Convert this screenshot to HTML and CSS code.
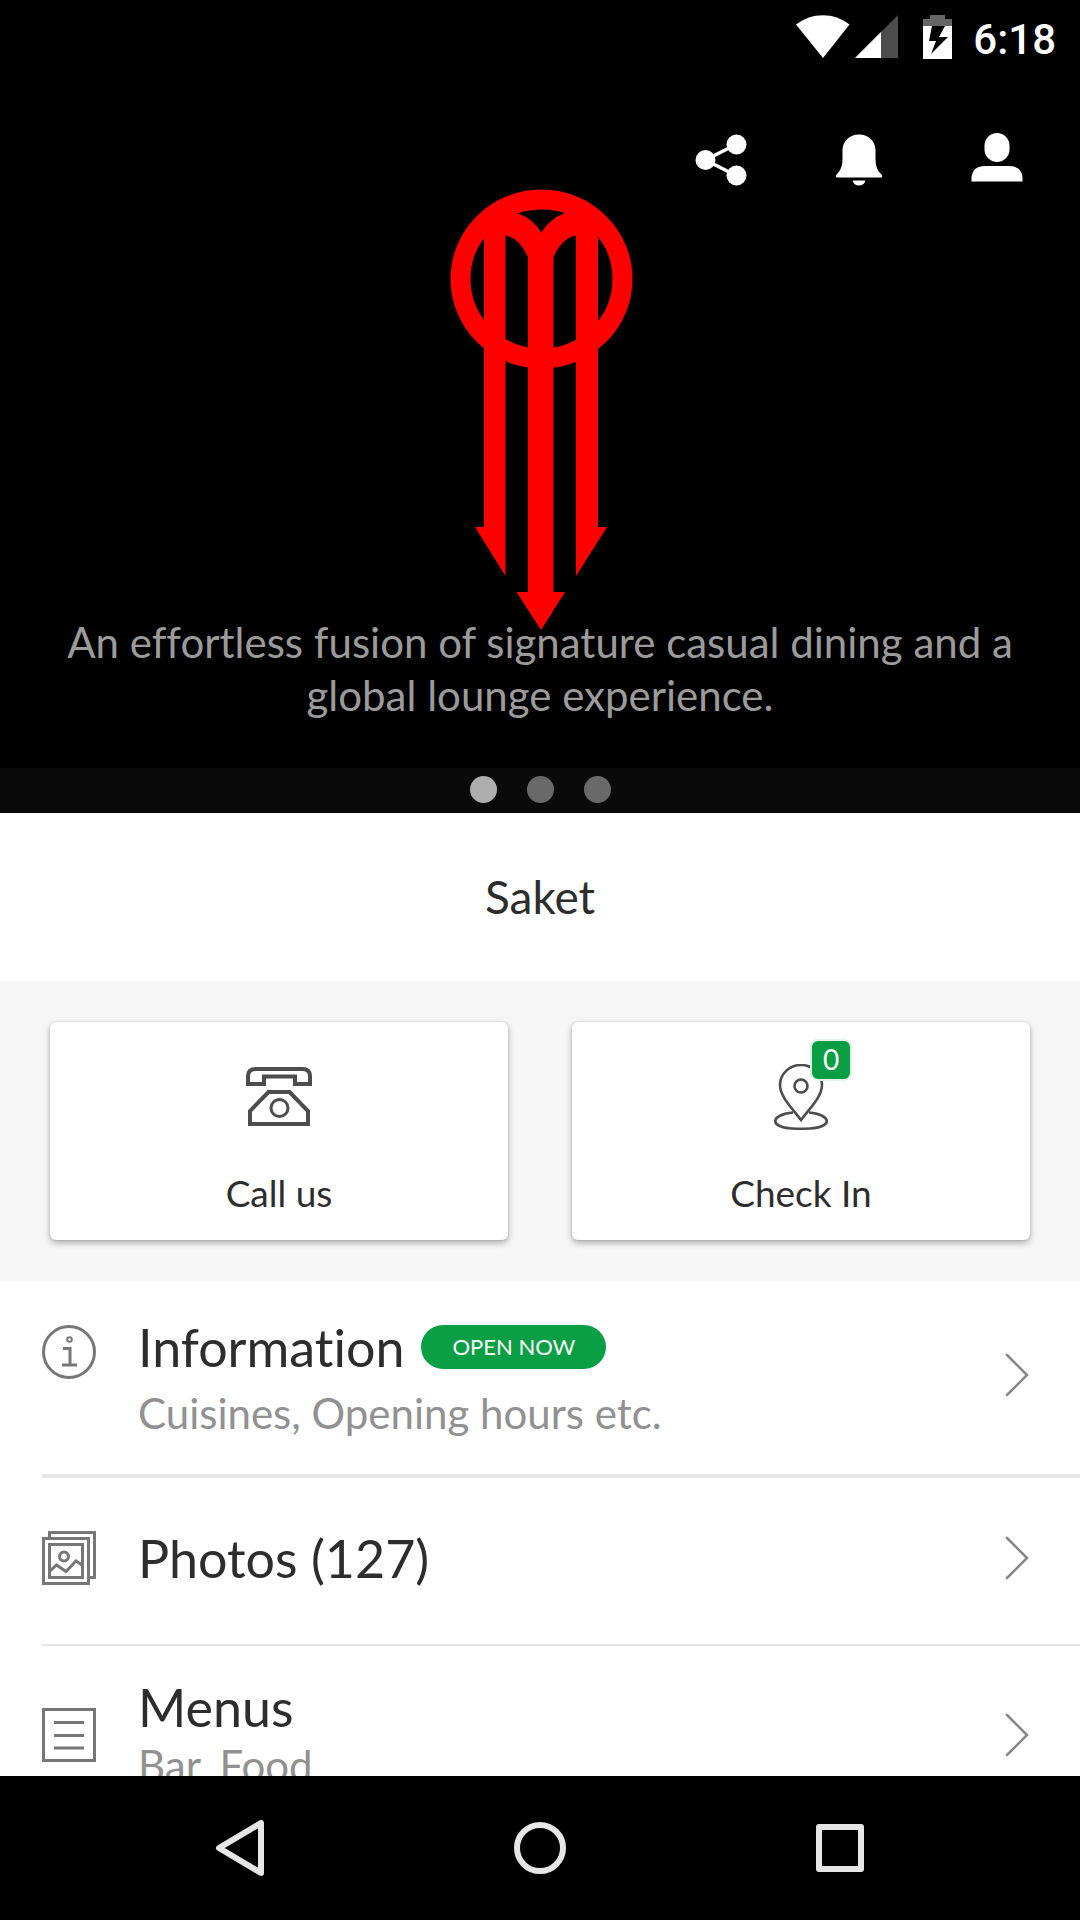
FILE: index.html
```html
<!DOCTYPE html>
<html lang="en">
<head>
<meta charset="utf-8">
<meta name="viewport" content="width=device-width, initial-scale=1">
<title>Saket</title>
<link rel="stylesheet" href="styles.css">
</head>
<body>
<div class="app">
  <main class="content">
    <section class="hero">
      <div class="status">
        <svg class="status-wifi" viewBox="0 0 54 44" width="54" height="44" aria-hidden="true"><path d="M0 9.500C16 -3 38 -3 53.500 9.500L27 43Z" fill="#fff"/></svg>
        <svg class="status-signal" viewBox="0 0 43 44" width="43" height="44" aria-hidden="true"><path d="M0 43L43 0V43Z" fill="#4d4d4d"/><path d="M0 43L26 17V43Z" fill="#fff"/></svg>
        <svg class="status-battery" viewBox="0 0 29 44" width="29" height="44" aria-hidden="true"><path d="M0 4H7V0H22V4H29V11H0Z" fill="#666"/><path d="M0 11H29V44H0Z" fill="#fff"/><path d="M9 11H22L16 22H25L8 39L13 26H6Z" fill="#000"/></svg>
        <time class="clock">6:18</time>
      </div>
      <div class="toolbar">
        <button class="tool" type="button" aria-label="Share">
          <svg viewBox="0 0 54 54" width="54" height="54"><g fill="#fff"><circle cx="11.500" cy="27" r="10"/><circle cx="42.500" cy="11.500" r="10"/><circle cx="42.500" cy="42.500" r="10"/></g><path d="M42 11.500L11.500 27L42 42.500" fill="none" stroke="#fff" stroke-width="3.500"/></svg>
        </button>
        <button class="tool" type="button" aria-label="Notifications">
          <svg viewBox="0 0 54 54" width="54" height="54"><path d="M27 1.500C37 1.500 43.500 9 43.500 17V26C43.500 34 46 38 49.500 41.500Q51 44 49 44.500H5Q3 44 4.500 41.500C8 38 10.500 34 10.500 26V17C10.500 9 17 1.500 27 1.500ZM20.500 47.500H33.500Q32 52.500 27 52.500Q22 52.500 20.500 47.500Z" fill="#fff"/></svg>
        </button>
        <button class="tool" type="button" aria-label="Account">
          <svg viewBox="0 0 54 54" width="54" height="54"><rect x="14.500" y="0" width="25" height="29" rx="12.500" fill="#fff"/><path d="M1.500 48.500V44Q3 33 15 33H39Q51 33 52.500 44V48.500Z" fill="#fff"/></svg>
        </button>
      </div>
      <svg class="logo" viewBox="447 188 186 443" width="186" height="443" role="img" aria-label="Restaurant logo">
        <ellipse cx="541.500" cy="279" rx="81" ry="79.500" fill="none" stroke="red" stroke-width="20"/>
        <path fill="red" d="M484 225Q488 208 505 213H517Q534 219 541.300 233Q549 219 565 213H577Q594 208 598 225V527H607L576 576V235.500Q562 238 553.500 257V592H565L541 630L516.500 592H528V257Q519 238 505.500 235.500V576L475 527H484Z"/>
      </svg>
      <p class="tagline">An effortless fusion of signature casual dining and a global lounge experience.</p>
      <div class="dots"><span class="dot dot-on"></span><span class="dot"></span><span class="dot"></span></div>
    </section>

    <h1 class="place">Saket</h1>

    <section class="actions">
      <button class="card" type="button">
        <span class="card-icon">
          <svg viewBox="0 0 66 66" width="66" height="66" fill="none" stroke="#4d4d4d" stroke-width="4" aria-hidden="true"><path d="M2 20V12Q2 5 10 5H56Q64 5 64 12V20H49V12.500H18V20Z"/><path d="M4 60V47L22.500 28H43.500L62 47V60Z"/><circle cx="33.500" cy="44" r="8.500" stroke-width="3"/></svg>
        </span>
        <span class="card-label">Call us</span>
      </button>
      <button class="card" type="button">
        <span class="card-icon">
          <svg viewBox="0 0 66 66" width="66" height="66" fill="none" stroke="#4d4d4d" stroke-width="2.600" aria-hidden="true"><path d="M33 56C25 45 12 33 12 21A21 20 0 0 1 54 21C54 33 41 45 33 56Z"/><circle cx="33" cy="22" r="6.500"/><path d="M25 48.500C2 51 1 63 24 64.500Q33 65 42 64.500C65 63 64 51 41 48.500"/></svg>
          <span class="count">0</span>
        </span>
        <span class="card-label">Check In</span>
      </button>
    </section>

    <nav class="list" aria-label="Sections">
      <a class="row row-info" href="#information">
        <svg class="row-icon" viewBox="0 0 54 54" width="54" height="54" fill="none" stroke="#777" stroke-width="3" aria-hidden="true"><circle cx="27" cy="27" r="25.500"/><circle cx="27.500" cy="14.500" r="2.300" stroke-width="2"/><path d="M21 23.500H28V40M20 40H35"/></svg>
        <span class="row-text">
          <span class="row-title">Information <span class="pill">OPEN NOW</span></span>
          <span class="row-note">Cuisines, Opening hours etc.</span>
        </span>
        <svg class="chevron" viewBox="0 0 24 44" width="24" height="44" aria-hidden="true"><path d="M2 2L22 22L2 42"/></svg>
      </a>
      <a class="row row-photos" href="#photos">
        <svg class="row-icon" viewBox="0 0 54 54" width="54" height="54" fill="none" stroke="#777" stroke-width="3" aria-hidden="true"><path d="M7.500 7V1.500H52.500V46.500H47"/><path d="M1.500 7.500H46.500V52.500H1.500Z"/><path d="M7.500 13.500H40.500V46.500H7.500Z"/><circle cx="22" cy="25.500" r="4.500"/><path d="M8 40L14.500 34L24 40.500L34 30L40 34"/></svg>
        <span class="row-text"><span class="row-title">Photos (127)</span></span>
        <svg class="chevron" viewBox="0 0 24 44" width="24" height="44" aria-hidden="true"><path d="M2 2L22 22L2 42"/></svg>
      </a>
      <a class="row row-menus" href="#menus">
        <svg class="row-icon" viewBox="0 0 54 54" width="54" height="54" fill="none" stroke="#777" stroke-width="3" aria-hidden="true"><path d="M1.500 1.500H52.500V52.500H1.500Z"/><path d="M12 14.500H42M12 27.500H42M12 40H42"/></svg>
        <span class="row-text">
          <span class="row-title">Menus</span>
          <span class="row-note">Bar, Food</span>
        </span>
        <svg class="chevron" viewBox="0 0 24 44" width="24" height="44" aria-hidden="true"><path d="M2 2L22 22L2 42"/></svg>
      </a>
    </nav>
  </main>

  <footer class="system-nav">
    <button class="key" type="button" aria-label="Back"><svg viewBox="0 0 60 60" width="60" height="60"><path d="M51 5V55L9 30Z"/></svg></button>
    <button class="key" type="button" aria-label="Home"><svg viewBox="0 0 60 60" width="60" height="60"><circle cx="30" cy="30" r="23"/></svg></button>
    <button class="key" type="button" aria-label="Recent apps"><svg viewBox="0 0 60 60" width="60" height="60"><rect x="9" y="9" width="42" height="42"/></svg></button>
  </footer>
</div>
</body>
</html>
```
FILE: styles.css
```css
* { box-sizing: border-box; }

body {
  margin: 0;
  background: #fff;
  color: #2d2d2d;
  font-family: Lato, "Liberation Sans", sans-serif;
  font-variant-ligatures: none;
}

button {
  padding: 0;
  border: 0;
  background: none;
  color: inherit;
  font: inherit;
}

svg { display: block; flex: none; }

.app {
  display: flex;
  flex-direction: column;
  height: 100vh;
}

.content {
  flex: 1;
  min-height: 0;
  overflow: hidden;
}

/* Hero */
.hero {
  display: flex;
  flex-direction: column;
  align-items: center;
  background: #000;
}

.status {
  display: flex;
  align-items: flex-start;
  align-self: stretch;
  justify-content: flex-end;
  height: 76px;
  padding: 15px 24px 0 0;
}

.status-signal { margin-left: 5px; }
.status-battery { margin: 0 21px 0 25px; }

.clock {
  color: #fff;
  font: 500 42px/50px Roboto, sans-serif;
}

.toolbar {
  display: flex;
  align-self: stretch;
  justify-content: flex-end;
  gap: 84px;
  padding: 57px 56px 1px 0;
}

.logo { margin-bottom: -15px; }

.tagline {
  margin: 0;
  padding: 0 40px 46px;
  color: #9b9b9b;
  font-size: 42px;
  line-height: 53px;
  text-align: center;
}

.dots {
  display: flex;
  align-self: stretch;
  justify-content: center;
  gap: 30px;
  padding: 8px 0 10px;
  background: #0a0a0a;
}

.dot {
  width: 27px;
  height: 27px;
  border-radius: 50%;
  background: #696969;
}

.dot-on { background: #adadad; }

.place {
  margin: 0;
  font-size: 46px;
  font-weight: 400;
  line-height: 168px;
  text-align: center;
}

/* Action cards */
.actions {
  display: grid;
  grid-template-columns: 1fr 1fr;
  gap: 64px;
  padding: 41px 50px;
  background: #f6f6f6;
}

.card {
  display: flex;
  flex-direction: column;
  align-items: center;
  gap: 40px;
  padding: 42px 0 24px;
  border-radius: 6px;
  background: #fff;
  box-shadow: 0 3px 6px rgba(0, 0, 0, 0.3), 0 0 2px rgba(0, 0, 0, 0.15);
}

.card-icon { position: relative; }

.card-label {
  font-size: 37px;
  line-height: 46px;
}

.count {
  position: absolute;
  top: -25px;
  left: 42px;
  width: 42px;
  height: 42px;
  border: 2px solid #dff3e6;
  border-radius: 8px;
  background: #0a9f45;
  color: #fff;
  font-size: 28px;
  line-height: 36px;
  text-align: center;
}

/* Section list */
.list { padding-left: 42px; }

.row {
  display: flex;
  align-items: center;
  gap: 42px;
  padding-right: 51px;
  border-bottom: 2px solid #e6e6e6;
  color: inherit;
  text-decoration: none;
}

.row-info { height: 197px; padding-bottom: 6px; border-bottom-width: 4px; }
.row-photos { height: 168px; padding-bottom: 6px; }
.row-menus { height: 180px; }

.row-info .row-icon { align-self: flex-start; margin-top: 44px; }

.row-text {
  display: flex;
  flex: 1;
  flex-direction: column;
}

.row-info .row-text { padding-top: 8px; }

.row-title {
  display: flex;
  align-items: center;
  gap: 17px;
  font-size: 52px;
  line-height: 60px;
}

.row-note {
  color: #919191;
  font-size: 42px;
  line-height: 56px;
}

.row-info .row-note { padding-top: 8px; }

.pill {
  padding: 0 31px;
  border-radius: 22px;
  background: #0a9f45;
  color: #fff;
  font-size: 22px;
  line-height: 44px;
}

.chevron {
  fill: none;
  stroke: #888;
  stroke-width: 2.6px;
  stroke-linecap: round;
}

/* System navigation keys */
.system-nav {
  display: flex;
  justify-content: center;
  gap: 240px;
  padding: 42px 0;
  background: #000;
}

.key svg {
  fill: none;
  stroke: #e6e6e6;
  stroke-width: 6px;
  stroke-linejoin: round;
}
```
